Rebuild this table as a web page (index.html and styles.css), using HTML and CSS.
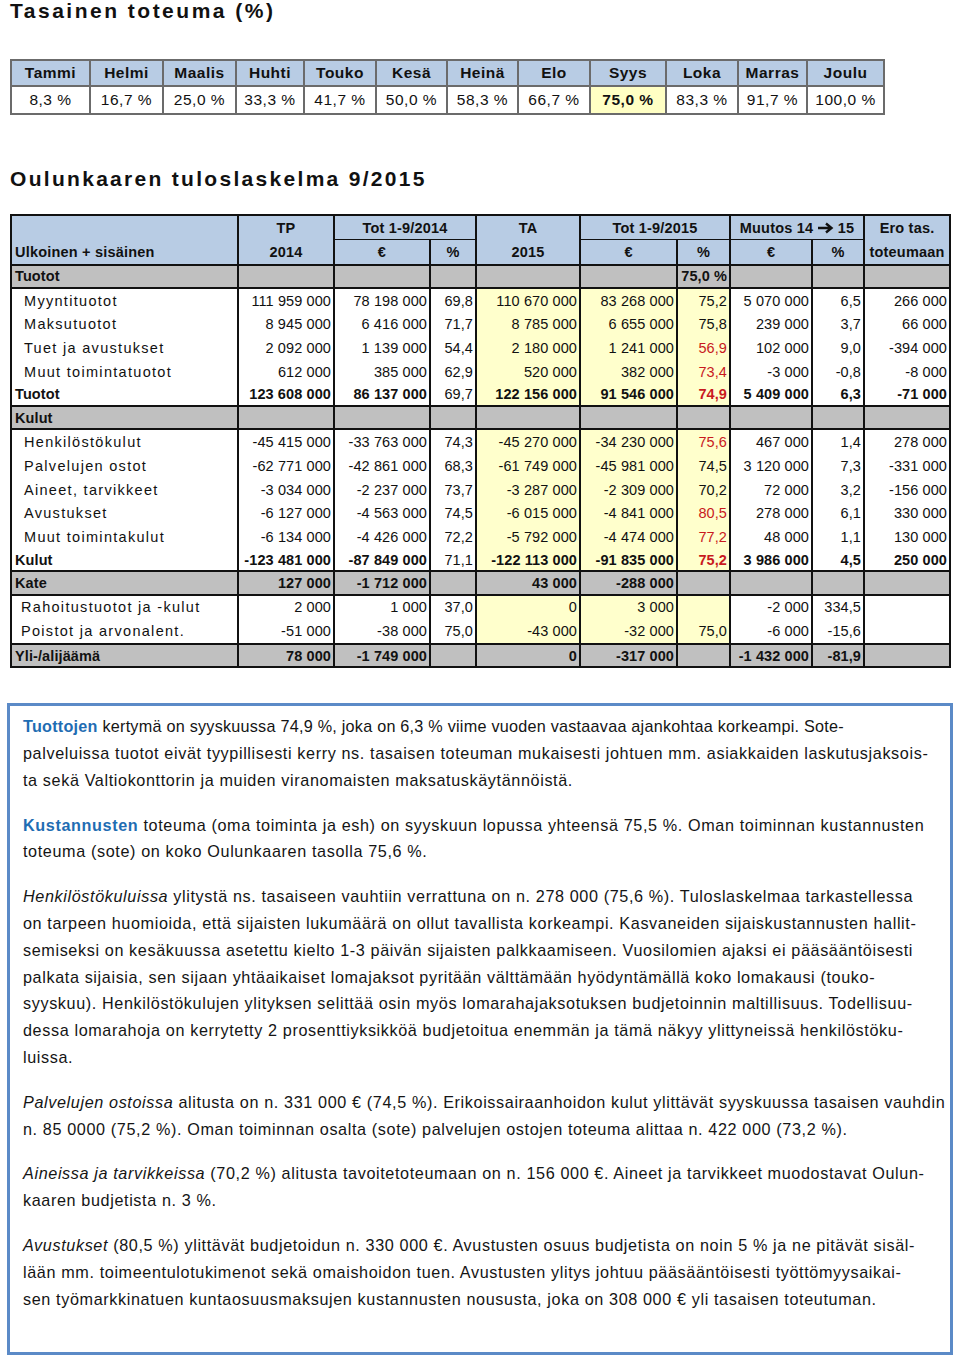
FILE: index.html
```html
<!DOCTYPE html>
<html lang="fi">
<head>
<meta charset="utf-8">
<title>Tasainen toteuma</title>
<link rel="stylesheet" href="styles.css">
</head>
<body>
<h1 class="title title-first">Tasainen toteuma (%)</h1>

<table class="months">
  <colgroup>
    <col style="width:79px"><col style="width:73px"><col style="width:73px"><col style="width:68px">
    <col style="width:72px"><col style="width:71px"><col style="width:71px"><col style="width:72px">
    <col style="width:76px"><col style="width:72px"><col style="width:69px"><col style="width:77px">
  </colgroup>
  <tr class="mh">
    <th>Tammi</th><th>Helmi</th><th>Maalis</th><th>Huhti</th><th>Touko</th><th>Kesä</th>
    <th>Heinä</th><th>Elo</th><th>Syys</th><th>Loka</th><th>Marras</th><th>Joulu</th>
  </tr>
  <tr class="md">
    <td>8,3 %</td><td>16,7 %</td><td>25,0 %</td><td>33,3 %</td><td>41,7 %</td><td>50,0 %</td>
    <td>58,3 %</td><td>66,7 %</td><td class="now">75,0 %</td><td>83,3 %</td><td>91,7 %</td><td>100,0 %</td>
  </tr>
</table>

<h2 class="title title-second">Oulunkaaren tuloslaskelma 9/2015</h2>

<table class="tl">
  <colgroup>
    <col style="width:227px"><col style="width:96px"><col style="width:96px"><col style="width:46px">
    <col style="width:104px"><col style="width:97px"><col style="width:53px"><col style="width:82px">
    <col style="width:52px"><col style="width:86px">
  </colgroup>
  <tr class="h1">
    <th class="lab"></th><th>TP</th><th colspan="2" class="grp">Tot 1-9/2014</th><th>TA</th>
    <th colspan="2" class="grp">Tot 1-9/2015</th>
    <th colspan="2" class="grp">Muutos 14 <svg class="arrow" width="16" height="12" viewBox="0 0 16 12"><path d="M0 6H12M8 1.5L13.5 6L8 10.5" fill="none" stroke="#111" stroke-width="2.4"/></svg> 15</th>
    <th>Ero tas.</th>
  </tr>
  <tr class="h2">
    <th class="lab">Ulkoinen + sisäinen</th><th>2014</th><th>€</th><th>%</th><th>2015</th><th>€</th><th>%</th><th>€</th><th>%</th><th>toteumaan</th>
  </tr>
  <tr class="sec">
    <td class="lab b">Tuotot</td><td></td><td></td><td></td><td></td><td></td><td class="b">75,0 %</td><td></td><td></td><td></td>
  </tr>
  <tr>
    <td class="lab ind">Myyntituotot</td><td>111 959 000</td><td>78 198 000</td><td>69,8</td><td class="y">110 670 000</td><td class="y">83 268 000</td><td class="y">75,2</td><td>5 070 000</td><td>6,5</td><td>266 000</td>
  </tr>
  <tr>
    <td class="lab ind">Maksutuotot</td><td>8 945 000</td><td>6 416 000</td><td>71,7</td><td class="y">8 785 000</td><td class="y">6 655 000</td><td class="y">75,8</td><td>239 000</td><td>3,7</td><td>66 000</td>
  </tr>
  <tr>
    <td class="lab ind">Tuet ja avustukset</td><td>2 092 000</td><td>1 139 000</td><td>54,4</td><td class="y">2 180 000</td><td class="y">1 241 000</td><td class="y red">56,9</td><td>102 000</td><td>9,0</td><td>-394 000</td>
  </tr>
  <tr>
    <td class="lab ind">Muut toimintatuotot</td><td>612 000</td><td>385 000</td><td>62,9</td><td class="y">520 000</td><td class="y">382 000</td><td class="y red">73,4</td><td>-3 000</td><td>-0,8</td><td>-8 000</td>
  </tr>
  <tr class="tot">
    <td class="lab b">Tuotot</td><td class="b">123 608 000</td><td class="b">86 137 000</td><td>69,7</td><td class="y b">122 156 000</td><td class="y b">91 546 000</td><td class="y red b">74,9</td><td class="b">5 409 000</td><td class="b">6,3</td><td class="b">-71 000</td>
  </tr>
  <tr class="sec">
    <td class="lab b">Kulut</td><td></td><td></td><td></td><td></td><td></td><td></td><td></td><td></td><td></td>
  </tr>
  <tr>
    <td class="lab ind">Henkilöstökulut</td><td>-45 415 000</td><td>-33 763 000</td><td>74,3</td><td class="y">-45 270 000</td><td class="y">-34 230 000</td><td class="y red">75,6</td><td>467 000</td><td>1,4</td><td>278 000</td>
  </tr>
  <tr>
    <td class="lab ind">Palvelujen ostot</td><td>-62 771 000</td><td>-42 861 000</td><td>68,3</td><td class="y">-61 749 000</td><td class="y">-45 981 000</td><td class="y">74,5</td><td>3 120 000</td><td>7,3</td><td>-331 000</td>
  </tr>
  <tr>
    <td class="lab ind">Aineet, tarvikkeet</td><td>-3 034 000</td><td>-2 237 000</td><td>73,7</td><td class="y">-3 287 000</td><td class="y">-2 309 000</td><td class="y">70,2</td><td>72 000</td><td>3,2</td><td>-156 000</td>
  </tr>
  <tr>
    <td class="lab ind">Avustukset</td><td>-6 127 000</td><td>-4 563 000</td><td>74,5</td><td class="y">-6 015 000</td><td class="y">-4 841 000</td><td class="y red">80,5</td><td>278 000</td><td>6,1</td><td>330 000</td>
  </tr>
  <tr>
    <td class="lab ind">Muut toimintakulut</td><td>-6 134 000</td><td>-4 426 000</td><td>72,2</td><td class="y">-5 792 000</td><td class="y">-4 474 000</td><td class="y red">77,2</td><td>48 000</td><td>1,1</td><td>130 000</td>
  </tr>
  <tr class="tot">
    <td class="lab b">Kulut</td><td class="b">-123 481 000</td><td class="b">-87 849 000</td><td>71,1</td><td class="y b">-122 113 000</td><td class="y b">-91 835 000</td><td class="y red b">75,2</td><td class="b">3 986 000</td><td class="b">4,5</td><td class="b">250 000</td>
  </tr>
  <tr class="sec line">
    <td class="lab b">Kate</td><td class="b">127 000</td><td class="b">-1 712 000</td><td></td><td class="b">43 000</td><td class="b">-288 000</td><td></td><td></td><td></td><td></td>
  </tr>
  <tr>
    <td class="lab ind2">Rahoitustuotot ja -kulut</td><td>2 000</td><td>1 000</td><td>37,0</td><td class="y">0</td><td class="y">3 000</td><td class="y"></td><td>-2 000</td><td>334,5</td><td></td>
  </tr>
  <tr>
    <td class="lab ind2">Poistot ja arvonalent.</td><td>-51 000</td><td>-38 000</td><td>75,0</td><td class="y">-43 000</td><td class="y">-32 000</td><td class="y">75,0</td><td>-6 000</td><td>-15,6</td><td></td>
  </tr>
  <tr class="sec line">
    <td class="lab b">Yli-/alijäämä</td><td class="b">78 000</td><td class="b">-1 749 000</td><td></td><td class="b">0</td><td class="b">-317 000</td><td></td><td class="b">-1 432 000</td><td class="b">-81,9</td><td></td>
  </tr>
</table>

<div class="note">
  <p><span class="tight"><span class="kw">Tuottojen</span> kertymä on syyskuussa 74,9 %, joka on 6,3 % viime vuoden vastaavaa ajankohtaa korkeampi. Sote-</span><br>palveluissa tuotot eivät tyypillisesti kerry ns. tasaisen toteuman mukaisesti johtuen mm. asiakkaiden laskutusjaksois-<br>ta sekä Valtiokonttorin ja muiden viranomaisten maksatuskäytännöistä.</p>
  <p><span class="kw">Kustannusten</span> toteuma (oma toiminta ja esh) on syyskuun lopussa yhteensä 75,5 %. Oman toiminnan kustannusten<br>toteuma (sote) on koko Oulunkaaren tasolla 75,6 %.</p>
  <p><em>Henkilöstökuluissa</em> ylitystä ns. tasaiseen vauhtiin verrattuna on n. 278 000 (75,6 %). Tuloslaskelmaa tarkastellessa<br>on tarpeen huomioida, että sijaisten lukumäärä on ollut tavallista korkeampi. Kasvaneiden sijaiskustannusten hallit-<br>semiseksi on kesäkuussa asetettu kielto 1-3 päivän sijaisten palkkaamiseen. Vuosilomien ajaksi ei pääsääntöisesti<br>palkata sijaisia, sen sijaan yhtäaikaiset lomajaksot pyritään välttämään hyödyntämällä koko lomakausi (touko-<br>syyskuu). Henkilöstökulujen ylityksen selittää osin myös lomarahajaksotuksen budjetoinnin maltillisuus. Todellisuu-<br>dessa lomarahoja on kerrytetty 2 prosenttiyksikköä budjetoitua enemmän ja tämä näkyy ylittyneissä henkilöstöku-<br>luissa.</p>
  <p><em>Palvelujen ostoissa</em> alitusta on n. 331 000 € (74,5 %). Erikoissairaanhoidon kulut ylittävät syyskuussa tasaisen vauhdin<br>n. 85 0000 (75,2 %). Oman toiminnan osalta (sote) palvelujen ostojen toteuma alittaa n. 422 000 (73,2 %).</p>
  <p><em>Aineissa ja tarvikkeissa</em> (70,2 %) alitusta tavoitetoteumaan on n. 156 000 €. Aineet ja tarvikkeet muodostavat Oulun-<br>kaaren budjetista n. 3 %.</p>
  <p><em>Avustukset</em> (80,5 %) ylittävät budjetoidun n. 330 000 €. Avustusten osuus budjetista on noin 5 % ja ne pitävät sisäl-<br>lään mm. toimeentulotukimenot sekä omaishoidon tuen. Avustusten ylitys johtuu pääsääntöisesti työttömyysaikai-<br>sen työmarkkinatuen kuntaosuusmaksujen kustannusten noususta, joka on 308 000 € yli tasaisen toteutuman.</p>
</div>
</body>
</html>
```

FILE: styles.css
```css
html, body {
  margin: 0;
  padding: 0;
  background: #fff;
}
body {
  font-family: "Liberation Sans", Arial, sans-serif;
  color: #111;
  width: 960px;
}
.title {
  margin: 0;
  padding-left: 10px;
  font-weight: bold;
  font-size: 21px;
  letter-spacing: 2.5px;
  line-height: 22px;
  color: #111;
}
.title-first {
  height: 59px;
}
.title-second {
  margin-top: 53px;
  height: 46px;
  letter-spacing: 2.3px;
}

/* month table */
.months {
  margin-left: 10px;
  border-collapse: collapse;
  table-layout: fixed;
  width: 873px;
}
.months th, .months td {
  border: 2px solid #6b6b6b;
  text-align: center;
  padding: 0;
  font-size: 15.5px;
  letter-spacing: 0.5px;
}
.months th {
  background: #b8cce4;
  font-weight: bold;
  height: 24px;
}
.months td {
  height: 26px;
  background: #fff;
}
.months td.now {
  background: #ffffc4;
  font-weight: bold;
}

/* result table */
.tl {
  margin-left: 10px;
  border-collapse: collapse;
  table-layout: fixed;
  width: 939px;
  font-size: 14.5px;
}
.tl th, .tl td {
  border-left: 2px solid #111;
  border-right: 2px solid #111;
  padding: 0 2px 0 2px;
  height: 23.76px;
  line-height: 16px;
  white-space: nowrap;
  overflow: hidden;
}
.tl tr.h1 th,
.tl tr.h2 th {
  height: 23.26px;
}
.tl tr.sec td,
.tl tr.tot td {
  height: 21.26px;
}
.tl td {
  text-align: right;
  letter-spacing: 0.1px;
}
.tl th {
  background: #b8cce4;
  font-weight: bold;
  text-align: center;
  letter-spacing: 0.2px;
}
.tl .h1 th {
  border-top: 2px solid #111;
}
.tl .h1 th.grp {
  border-bottom: 1px solid #111;
}
.tl .h2 th {
  border-bottom: 2px solid #111;
}
.tl th.lab {
  text-align: left;
  padding-left: 3px;
}
.tl td.lab {
  text-align: left;
  letter-spacing: 1.3px;
  padding-left: 3px;
}
.tl td.ind {
  padding-left: 12px;
}
.tl td.ind2 {
  padding-left: 9px;
}
.tl .b {
  font-weight: bold;
  letter-spacing: 0.1px;
}
.tl td.lab.b {
  letter-spacing: 0.1px;
}
.tl tr.sec td {
  background: #c0c0c0;
  border-bottom: 2px solid #111;
}
.tl tr.sec.line td {
  border-top: 2px solid #111;
}
.tl tr.tot td {
  border-bottom: 2px solid #111;
}
.tl td.y {
  background: #ffffcc;
}
.tl td.red {
  color: #c8191e;
}
.arrow {
  vertical-align: -1px;
}

/* notes */
.note {
  margin: 35px 0 0 7px;
  width: 946px;
  height: 652px;
  box-sizing: border-box;
  border: 3px solid #5b8ac7;
  padding: 7px 0 0 13px;
  font-size: 16.2px;
  line-height: 26.8px;
  color: #151515;
  letter-spacing: 0.62px;
  white-space: nowrap;
}
.note p {
  margin: 0 0 18px 0;
}
.note .tight {
  letter-spacing: 0.24px;
}
.note .kw {
  color: #1f6db3;
  font-weight: bold;
}
.note em {
  font-style: italic;
}
```
